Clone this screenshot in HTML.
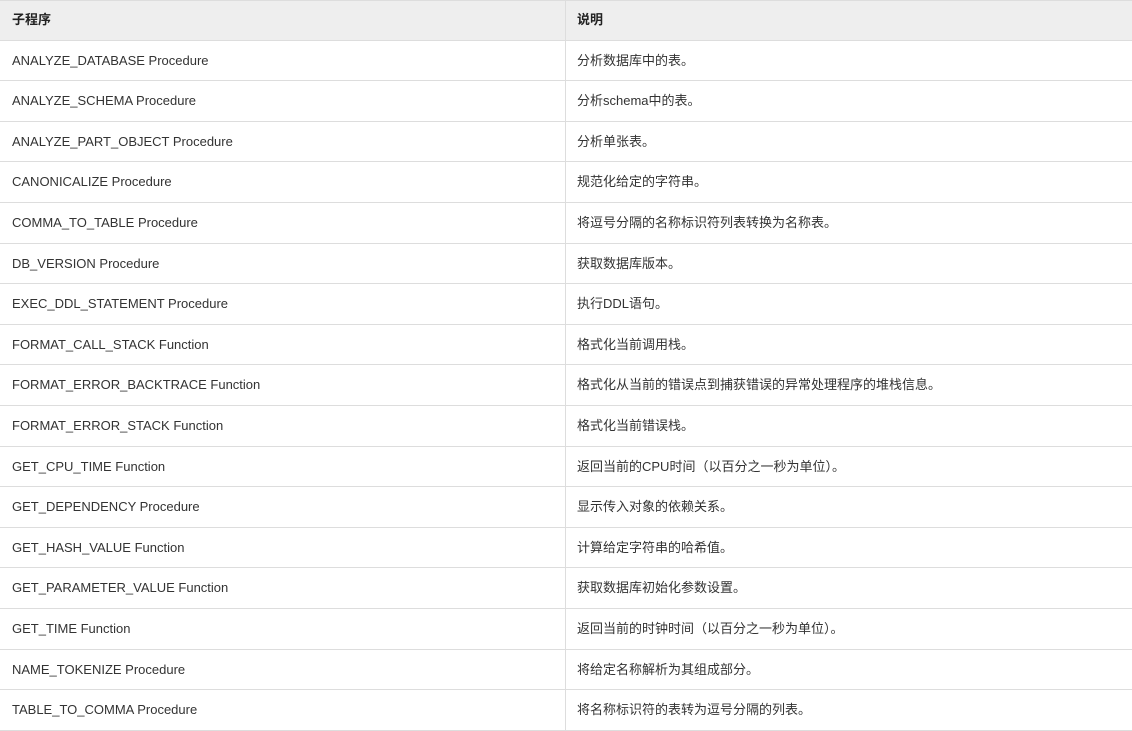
<!DOCTYPE html>
<html><head><meta charset="utf-8"><style>
html,body{margin:0;padding:0;background:#fff;}
body{font-family:"Liberation Sans","Noto Sans CJK SC",sans-serif;font-size:13px;color:#333;border-top:1px solid #ddd;width:1132px;}
.r{display:flex;height:40.6px;box-sizing:border-box;border-bottom:1px solid #ddd;}
.r div{line-height:39px;white-space:nowrap;padding-left:12px;box-sizing:border-box;}
.r div:first-child{width:566px;border-right:1px solid #ddd;}
.r div:last-child{flex:1;padding-left:11px;}
.h{background:#eee;font-weight:bold;color:#222;height:39.6px;}
.h div{line-height:38px;}
</style></head><body>
<div class="r h"><div>子程序</div><div>说明</div></div>
<div class="r"><div>ANALYZE_DATABASE Procedure</div><div>分析数据库中的表。</div></div>
<div class="r"><div>ANALYZE_SCHEMA Procedure</div><div>分析schema中的表。</div></div>
<div class="r"><div>ANALYZE_PART_OBJECT Procedure</div><div>分析单张表。</div></div>
<div class="r"><div>CANONICALIZE Procedure</div><div>规范化给定的字符串。</div></div>
<div class="r"><div>COMMA_TO_TABLE Procedure</div><div>将逗号分隔的名称标识符列表转换为名称表。</div></div>
<div class="r"><div>DB_VERSION Procedure</div><div>获取数据库版本。</div></div>
<div class="r"><div>EXEC_DDL_STATEMENT Procedure</div><div>执行DDL语句。</div></div>
<div class="r"><div>FORMAT_CALL_STACK Function</div><div>格式化当前调用栈。</div></div>
<div class="r"><div>FORMAT_ERROR_BACKTRACE Function</div><div>格式化从当前的错误点到捕获错误的异常处理程序的堆栈信息。</div></div>
<div class="r"><div>FORMAT_ERROR_STACK Function</div><div>格式化当前错误栈。</div></div>
<div class="r"><div>GET_CPU_TIME Function</div><div>返回当前的CPU时间（以百分之一秒为单位）。</div></div>
<div class="r"><div>GET_DEPENDENCY Procedure</div><div>显示传入对象的依赖关系。</div></div>
<div class="r"><div>GET_HASH_VALUE Function</div><div>计算给定字符串的哈希值。</div></div>
<div class="r"><div>GET_PARAMETER_VALUE Function</div><div>获取数据库初始化参数设置。</div></div>
<div class="r"><div>GET_TIME Function</div><div>返回当前的时钟时间（以百分之一秒为单位）。</div></div>
<div class="r"><div>NAME_TOKENIZE Procedure</div><div>将给定名称解析为其组成部分。</div></div>
<div class="r"><div>TABLE_TO_COMMA Procedure</div><div>将名称标识符的表转为逗号分隔的列表。</div></div>
</body></html>
